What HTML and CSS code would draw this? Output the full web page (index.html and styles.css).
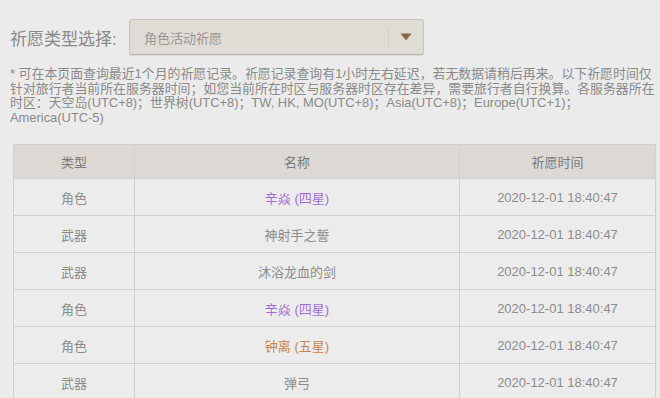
FILE: index.html
```html
<!DOCTYPE html>
<html lang="zh-CN">
<head>
    <meta charset="UTF-8">
    <meta name="viewport" content="width=device-width, initial-scale=1.0">
    <title>祈愿记录</title>
    <link rel="stylesheet" href="styles.css">
</head>
<body>
    <div class="filter">
        <span class="filter-label">祈愿类型选择:</span>
        <div class="select">
            <span class="select-text">角色活动祈愿</span>
            <span class="select-arrow">
                <svg width="12" height="8" viewBox="0 0 12 8"><path d="M0.5 0.5 L11.5 0.5 L6 7.5 Z" fill="#8a6a3c"/></svg>
            </span>
        </div>
    </div>
    <p class="note">* 可在本页面查询最近1个月的祈愿记录。祈愿记录查询有1小时左右延迟，若无数据请稍后再来。以下祈愿时间仅针对旅行者当前所在服务器时间；如您当前所在时区与服务器时区存在差异，需要旅行者自行换算。各服务器所在时区：天空岛(UTC+8)；世界树(UTC+8)；TW, HK, MO(UTC+8)；Asia(UTC+8)；Europe(UTC+1)；America(UTC-5)</p>
    <table class="log">
        <thead>
            <tr>
                <th class="col-type">类型</th>
                <th class="col-name">名称</th>
                <th class="col-time">祈愿时间</th>
            </tr>
        </thead>
        <tbody>
            <tr><td>角色</td><td class="star4">辛焱 (四星)</td><td>2020-12-01 18:40:47</td></tr>
            <tr><td>武器</td><td>神射手之誓</td><td>2020-12-01 18:40:47</td></tr>
            <tr><td>武器</td><td>沐浴龙血的剑</td><td>2020-12-01 18:40:47</td></tr>
            <tr><td>角色</td><td class="star4">辛焱 (四星)</td><td>2020-12-01 18:40:47</td></tr>
            <tr><td>角色</td><td class="star5">钟离 (五星)</td><td>2020-12-01 18:40:47</td></tr>
            <tr><td>武器</td><td>弹弓</td><td>2020-12-01 18:40:47</td></tr>
        </tbody>
    </table>
</body>
</html>
```
FILE: styles.css
```css
body {
    background-color: #ebebeb;
    font-family: "Liberation Sans", "Noto Sans CJK SC", sans-serif;
    margin: 0;
    padding: 19px 5px 0 10px;
    color: #888;
    overflow: hidden;
}

.filter {
    display: flex;
    align-items: center;
}

.filter-label {
    font-size: 17px;
    color: #8a8a8a;
    width: 119px;
}

.select {
    width: 293px;
    height: 34px;
    display: flex;
    align-items: center;
    background-color: #dfdcd6;
    border: 1px solid #c9c5be;
    border-bottom-color: #b9b5ae;
    border-radius: 3px;
    box-shadow: 0 1px 1px rgba(0,0,0,0.08);
}

.select-text {
    flex: 1;
    padding-left: 14px;
    font-size: 13px;
    color: #9a9792;
}

.select-arrow {
    width: 34px;
    height: 20px;
    border-left: 1px solid #d2cec7;
    display: flex;
    align-items: center;
    justify-content: center;
}

.note {
    margin: 12px 0 0;
    font-size: 12.9px;
    line-height: 14.5px;
    color: #8a8a8a;
}

.log {
    margin: 19px 0 0 3px;
    width: 643px;
    border-collapse: collapse;
    font-size: 13px;
    table-layout: fixed;
}

.log th,
.log td {
    border: 1px solid #cfcfcf;
    text-align: center;
    padding: 0;
}

.log th {
    height: 33px;
    background-color: #dcd9d4;
    font-weight: normal;
    color: #7a7a7a;
}

.log td {
    height: 36px;
    background-color: #ececec;
    color: #8c8c8c;
}

.col-type {
    width: 120px;
}

.col-name {
    width: 324px;
}

.log td.star4 {
    color: #a26ed6;
}

.log td.star5 {
    color: #c8844a;
}
```
